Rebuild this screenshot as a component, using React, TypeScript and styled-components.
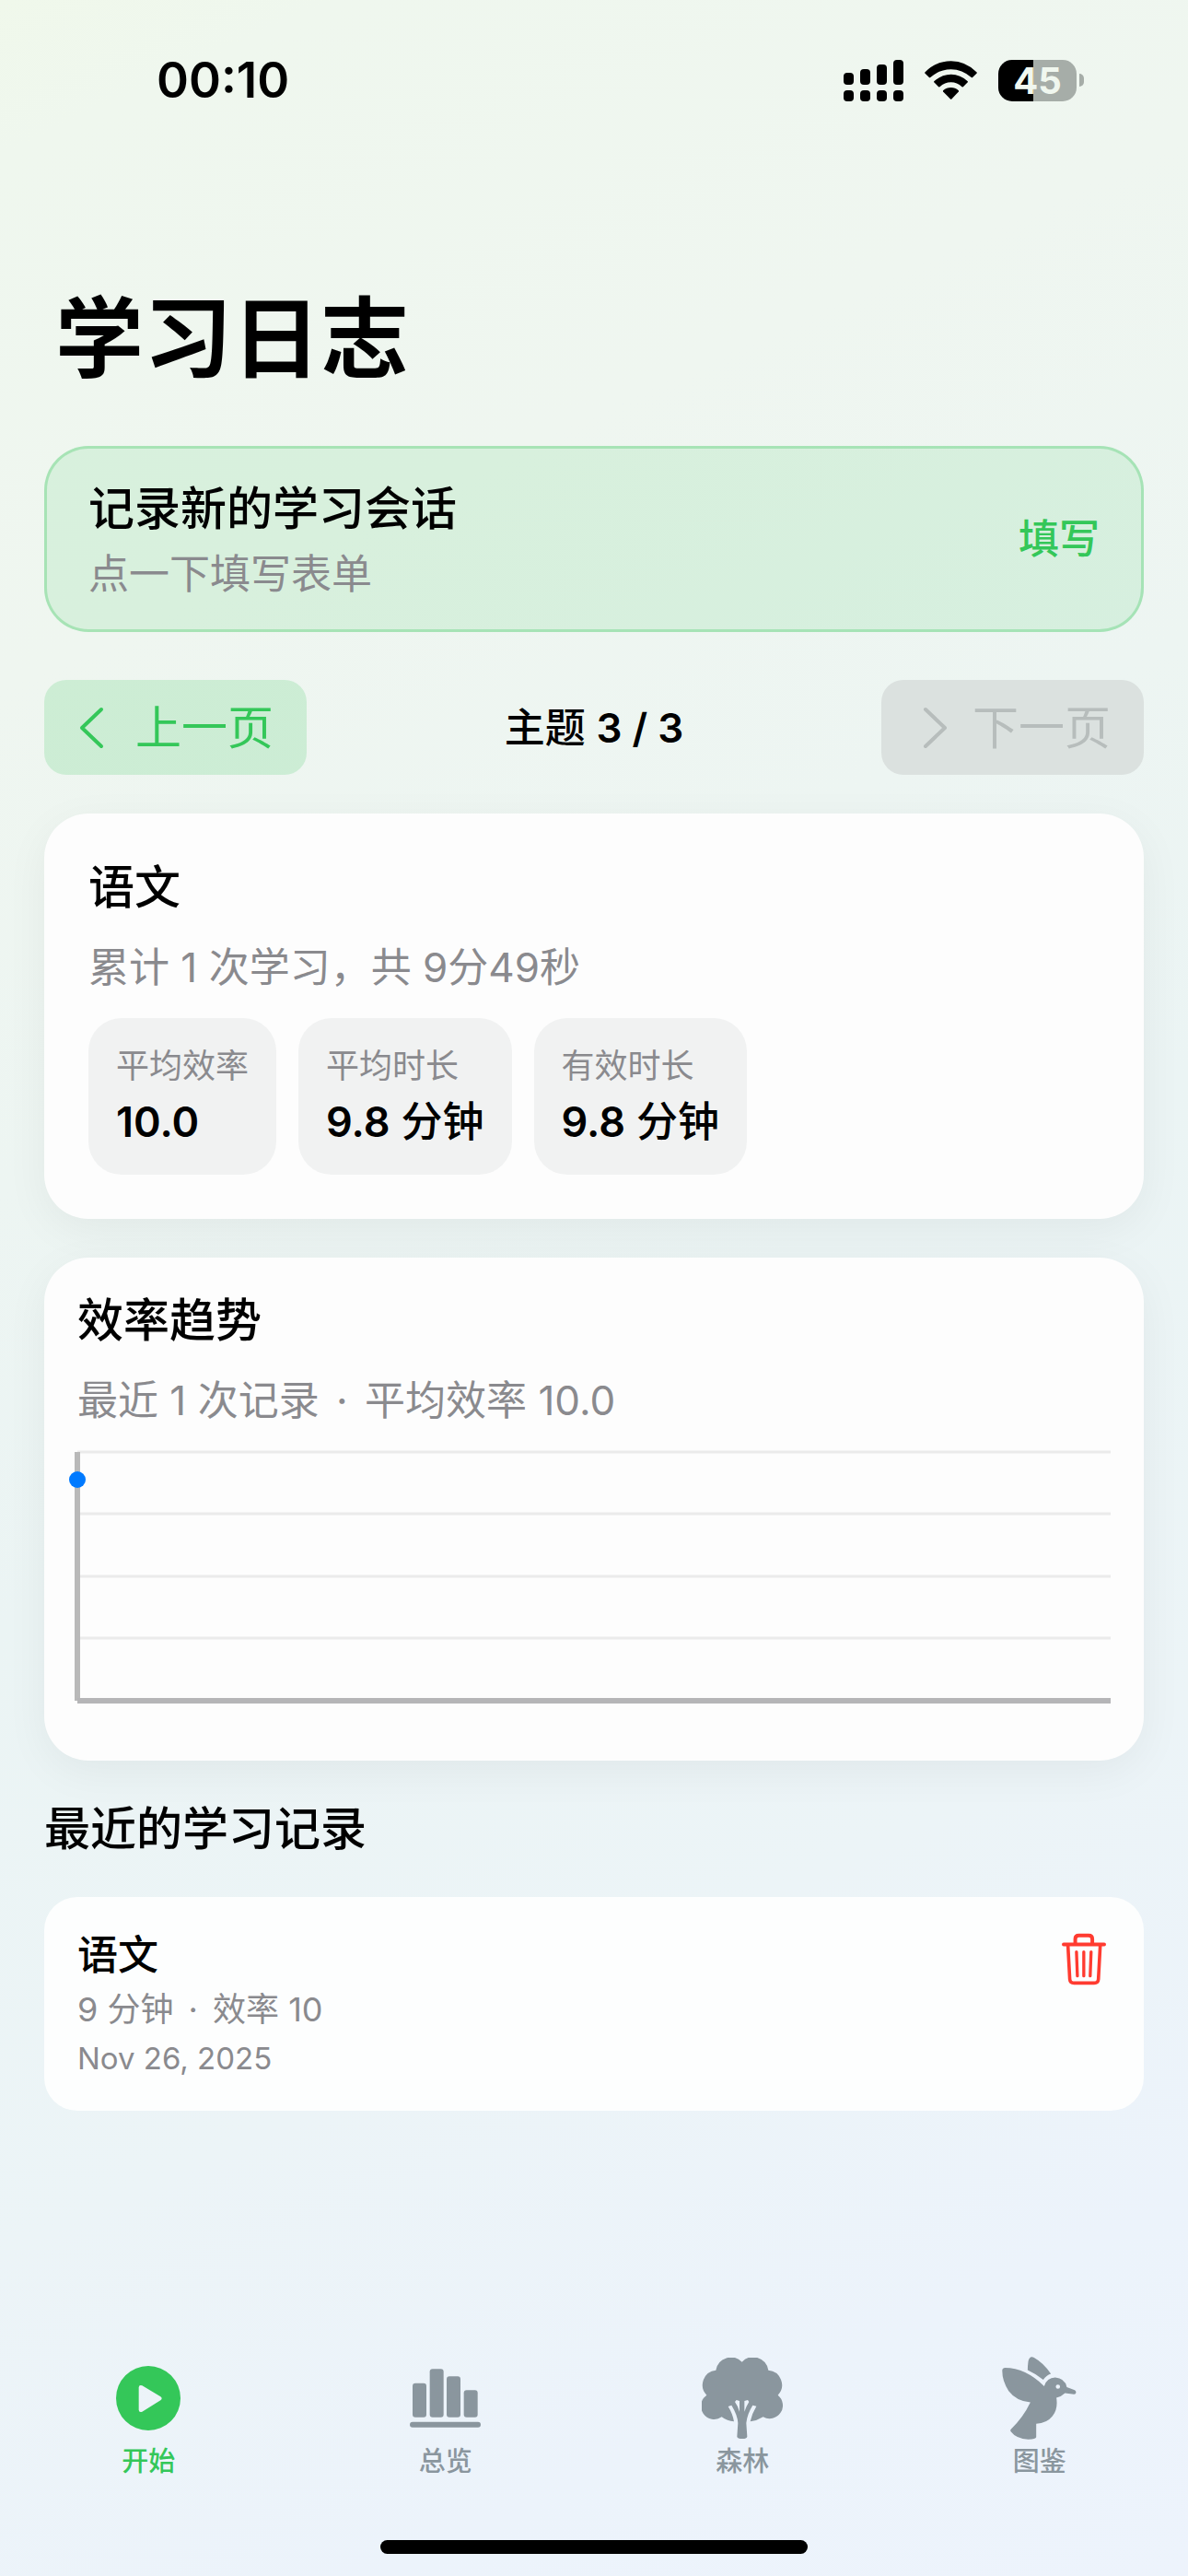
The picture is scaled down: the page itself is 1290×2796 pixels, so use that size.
import React from "react";
import styled, { createGlobalStyle } from "styled-components";

const green = "#34c759";
const gray = "#8a8a8e";
const slate = "#8a969e";

const GlobalStyle = createGlobalStyle`
  *, *::before, *::after { box-sizing: border-box; }
  body {
    margin: 0;
    font-family: Inter, "Noto Sans CJK SC", sans-serif;
    color: #000;
  }
  button { font: inherit; border: 0; margin: 0; cursor: pointer; }
  h1, h2, h3, p, ul, dl, dd { margin: 0; padding: 0; }
  svg { display: block; flex: none; }
`;

const Page = styled.div`
  min-height: 100vh;
  display: flex;
  flex-direction: column;
  background: linear-gradient(155deg, #f0f8eb 0%, #eff7ee 5%, #eff6f0 22%, #edf5f2 38%, #ebf4f4 52%, #ecf4f7 72%, #ecf3fb 88%, #edf3fc 100%);
`;

const StatusBar = styled.header`
  height: 174px;
  padding: 0 113px 0 170px;
  display: flex;
  align-items: center;
  justify-content: space-between;
`;

const Clock = styled.time`
  font-size: 53px;
  line-height: 60px;
  font-weight: 600;
`;

const StatusIcons = styled.div`
  display: flex;
  align-items: center;
  gap: 23px;
`;

const Battery = styled.div`
  display: flex;
  align-items: center;
  gap: 3px;
`;

const BatteryBody = styled.div<{ $level: number }>`
  width: 85px;
  height: 45px;
  border-radius: 15px;
  display: flex;
  align-items: center;
  justify-content: center;
  font-size: 40px;
  line-height: 45px;
  font-weight: 700;
  color: #f0f7ef;
  background: linear-gradient(to right, #000 ${(p) => p.$level}%, #a6ada8 ${(p) => p.$level}%);
`;

const BatteryTip = styled.span`
  width: 5px;
  height: 14px;
  border-radius: 0 7px 7px 0;
  background: #a6ada8;
`;

const PageTitle = styled.h1`
  padding: 133px 60px 0;
  font-size: 96px;
  line-height: 120px;
  font-weight: 700;
`;

const Content = styled.main`
  padding: 57px 48px 42px;
  display: flex;
  flex-direction: column;
  gap: 42px;
`;

const Heading = styled.h2`
  font-size: 50px;
  line-height: 64px;
  font-weight: 500;
`;

const Secondary = styled.p`
  font-size: 44px;
  line-height: 54px;
  color: ${gray};
`;

const Dot = styled.span`
  margin: 0 6px;
`;

const Figure = styled.span`
  font-weight: 600;
`;

const NewSession = styled.button`
  width: 100%;
  padding: 36px 48px;
  display: flex;
  align-items: center;
  justify-content: space-between;
  text-align: left;
  color: #000;
  border-radius: 48px;
  background: rgba(52, 199, 89, 0.12);
  box-shadow: inset 0 0 0 3px rgba(52, 199, 89, 0.3);
`;

const SessionText = styled.span`
  display: flex;
  flex-direction: column;
  gap: 12px;
`;

const SessionAction = styled.span`
  font-size: 44px;
  line-height: 54px;
  font-weight: 500;
  color: ${green};
`;

const Pager = styled.nav`
  margin-top: 10px;
  display: flex;
  align-items: center;
  justify-content: space-between;
`;

const PagerButton = styled.button`
  height: 103px;
  padding: 0 36px;
  display: flex;
  align-items: center;
  gap: 12px;
  border-radius: 24px;
  font-size: 50px;
  line-height: 60px;
  color: ${green};
  background: rgba(52, 199, 89, 0.18);

  &:disabled {
    color: #b7bdbc;
    background: #dbe1df;
    cursor: default;
  }
`;

const PagerLabel = styled.p`
  font-size: 44px;
  line-height: 54px;
  font-weight: 500;
`;

const Card = styled.section<{ $padding: number }>`
  padding: ${(p) => p.$padding}px;
  display: flex;
  flex-direction: column;
  gap: 28px;
  border-radius: 48px;
  background: #fdfdfd;
  box-shadow: 0 12px 48px rgba(0, 0, 0, 0.05);
`;

const Stats = styled.dl`
  display: flex;
  gap: 24px;
`;

const Stat = styled.div`
  padding: 30px;
  display: flex;
  flex-direction: column;
  gap: 12px;
  border-radius: 36px;
  background: #f1f2f2;
`;

const StatName = styled.dt`
  font-size: 36px;
  line-height: 44px;
  color: ${gray};
`;

const StatValue = styled.dd`
  font-size: 45px;
  line-height: 54px;
  font-weight: 500;
`;

const Chart = styled.svg`
  width: 100%;
  height: 300px;
  overflow: visible;
`;

const Record = styled.article`
  padding: 36px;
  display: flex;
  align-items: flex-start;
  justify-content: space-between;
  border-radius: 36px;
  background: #fdfefe;
`;

const RecordText = styled.div`
  display: flex;
  flex-direction: column;
  gap: 10px;
`;

const RecordTitle = styled.h3`
  font-size: 44px;
  line-height: 54px;
  font-weight: 500;
`;

const RecordMeta = styled.p`
  font-size: 36px;
  line-height: 44px;
  color: ${gray};
`;

const RecordDate = styled.time`
  font-size: 33px;
  line-height: 42px;
  color: ${gray};
`;

const DeleteButton = styled.button`
  padding: 3px 5px;
  background: none;
  color: #ff3b30;
`;

const Footer = styled.footer`
  margin-top: auto;
  padding-bottom: 24px;
  display: flex;
  flex-direction: column;
  align-items: center;
  gap: 67px;
`;

const TabBar = styled.nav`
  width: 100%;
  display: grid;
  grid-template-columns: repeat(4, 1fr);
`;

const Tab = styled.button<{ $active?: boolean }>`
  padding: 0;
  display: flex;
  flex-direction: column;
  align-items: center;
  gap: 6px;
  background: none;
  font-size: 29px;
  line-height: 36px;
  font-weight: 500;
  color: ${(p) => (p.$active ? green : slate)};
`;

const TabIcon = styled.span`
  height: 90px;
  display: flex;
  align-items: center;
`;

const HomeIndicator = styled.div`
  width: 36%;
  height: 15px;
  border-radius: 8px;
  background: #000;
`;

const SignalIcon = () => (
  <svg width="65" height="45" viewBox="0 0 65 45" aria-hidden="true">
    <rect x="0" y="14" width="11" height="13" rx="4" />
    <rect x="18" y="10" width="11" height="17" rx="4" />
    <rect x="36" y="5" width="11" height="22" rx="4" />
    <rect x="54" y="0" width="11" height="27" rx="4" />
    {[0, 18, 36, 54].map((x) => (
      <rect key={x} x={x} y="33" width="11" height="12" rx="4" />
    ))}
  </svg>
);

const WifiIcon = () => (
  <svg width="57" height="42" viewBox="371 75 173 126" aria-hidden="true">
    <path d="M372 112 Q409 75 458 75 Q506 75 543 112 Q544 114 543 115 L529 129 Q527 130 525 129 Q495 102 458 102 Q420 102 390 129 Q388 130 386 129 L372 115 Q371 114 372 112Z" />
    <path d="M402 142 Q427 119 458 119 Q489 119 513 142 Q514 144 513 145 L498 160 Q496 161 494 160 Q478 145 458 145 Q437 145 421 160 Q419 161 417 160 L402 145 Q401 144 402 142Z" />
    <path d="M432 172 Q443 162 458 162 Q472 162 483 172 Q484 174 483 176 L460 200 Q458 202 456 200 L432 176 Q431 174 432 172Z" />
  </svg>
);

const Chevron = ({ d }: { d: string }) => (
  <svg width="51" height="51" viewBox="0 0 51 51" fill="none" stroke="currentColor" strokeWidth="4" strokeLinecap="round" strokeLinejoin="round" aria-hidden="true">
    <path d={d} />
  </svg>
);

const TrashIcon = () => (
  <svg width="48" height="57" viewBox="159 107 145 170" fill="none" stroke="currentColor" strokeLinecap="round" strokeLinejoin="round" aria-hidden="true">
    <path strokeWidth="12" d="M165 144H298" />
    <path strokeWidth="12" d="M203 142V126Q203 114 215 114H247Q259 114 259 126V142" />
    <path strokeWidth="11" d="M179 146L185 257Q186 270 199 270H265Q278 270 279 257L285 146" />
    <path strokeWidth="10" d="M207 168L210 247M231 168V247M255 168L252 247" />
  </svg>
);

const PlayIcon = () => (
  <svg width="70" height="70" viewBox="141 84 210 210" fill="currentColor" aria-hidden="true">
    <path fillRule="evenodd" d="M246 84A105 105 0 0 1 246 294A105 105 0 0 1 246 84ZM215 154V227Q216 237 226 233L286 196Q294 190 286 184L226 148Q216 144 215 154Z" />
  </svg>
);

const BarsIcon = () => (
  <svg width="77" height="64" viewBox="1095 95 231 190" fill="currentColor" aria-hidden="true">
    <rect x="1104" y="141" width="45" height="111" rx="9" />
    <rect x="1160" y="95" width="45" height="157" rx="9" />
    <rect x="1215" y="119" width="45" height="133" rx="9" />
    <rect x="1271" y="164" width="45" height="88" rx="9" />
    <rect x="1095" y="267" width="231" height="18" rx="9" />
  </svg>
);

const TreeIcon = () => (
  <svg width="88" height="88" viewBox="126 57 262 264" fill="currentColor" aria-hidden="true">
    <path
      fillRule="evenodd"
      d="M256 71A50 50 0 0 1 342 98A48 48 0 0 1 373 179A43 43 0 0 1 325 250Q306 262 283 265Q289 238 303 215L291 212Q273 240 270 270L273 314Q272 321 257 321Q241 321 240 314L243 270Q242 245 222 212L211 216Q226 240 230 265Q208 264 190 250A43 43 0 0 1 141 179A48 48 0 0 1 171 98A50 50 0 0 1 256 71ZM233 201L238 195L248 198V233Q243 215 233 201ZM279 201L275 195L264 198V233Q270 215 279 201Z"
    />
  </svg>
);

const BirdIcon = () => (
  <svg width="81" height="90" viewBox="1104 51 242 271" fill="currentColor" aria-hidden="true">
    <path d="M1199 52Q1192 54 1189 66Q1187 80 1187 95Q1215 108 1238 126Q1248 112 1263 107Q1240 72 1208 54Q1203 51 1199 52Z" />
    <path
      fillRule="evenodd"
      d="M1113 87Q1180 87 1241 147Q1250 120 1277 119Q1308 121 1315 150L1341 160Q1346 163 1345 169Q1343 174 1338 174L1309 170Q1298 181 1281 185Q1287 222 1268 245Q1250 268 1215 270V314Q1214 321 1189 321Q1150 320 1132 296Q1129 290 1133 287Q1172 250 1196 200Q1150 196 1125 163Q1103 130 1104 95Q1105 87 1113 87ZM1286 142A7 7 0 0 0 1286 156A7 7 0 0 0 1286 142Z"
    />
  </svg>
);

const stats = [
  { name: "平均效率", figure: "10.0", unit: "" },
  { name: "平均时长", figure: "9.8", unit: " 分钟" },
  { name: "有效时长", figure: "9.8", unit: " 分钟" },
];

const tabs = [
  { label: "开始", icon: <PlayIcon /> },
  { label: "总览", icon: <BarsIcon /> },
  { label: "森林", icon: <TreeIcon /> },
  { label: "图鉴", icon: <BirdIcon /> },
];

const gridLines = [1, 68, 136, 203];

export default function App() {
  return (
    <Page lang="zh-CN">
      <GlobalStyle />
      <StatusBar>
        <Clock>00:10</Clock>
        <StatusIcons>
          <SignalIcon />
          <WifiIcon />
          <Battery>
            <BatteryBody $level={45}>45</BatteryBody>
            <BatteryTip />
          </Battery>
        </StatusIcons>
      </StatusBar>

      <PageTitle>学习日志</PageTitle>

      <Content>
        <NewSession type="button">
          <SessionText>
            <Heading as="span">记录新的学习会话</Heading>
            <Secondary as="span">点一下填写表单</Secondary>
          </SessionText>
          <SessionAction>填写</SessionAction>
        </NewSession>

        <Pager aria-label="主题">
          <PagerButton type="button">
            <Chevron d="M26 6L5 26L26 46" />
            上一页
          </PagerButton>
          <PagerLabel>
            主题 <Figure>3 / 3</Figure>
          </PagerLabel>
          <PagerButton type="button" disabled>
            <Chevron d="M12 6L33 26L12 46" />
            下一页
          </PagerButton>
        </Pager>

        <Card $padding={48}>
          <Heading>语文</Heading>
          <Secondary>累计 1 次学习，共 9分49秒</Secondary>
          <Stats>
            {stats.map((s) => (
              <Stat key={s.name}>
                <StatName>{s.name}</StatName>
                <StatValue>
                  <Figure>{s.figure}</Figure>
                  {s.unit}
                </StatValue>
              </Stat>
            ))}
          </Stats>
        </Card>

        <Card $padding={36}>
          <Heading>效率趋势</Heading>
          <Secondary>
            最近 1 次记录 <Dot>·</Dot> 平均效率 10.0
          </Secondary>
          <Chart role="img" aria-label="效率趋势">
            {gridLines.map((y) => (
              <line key={y} x1="0" x2="100%" y1={y} y2={y} stroke="#ebebeb" strokeWidth="3" />
            ))}
            <line x1="0" x2="0" y1="1" y2="271" stroke="#b9b9b9" strokeWidth="6" />
            <line x1="0" x2="100%" y1="271" y2="271" stroke="#b5b5b7" strokeWidth="6" />
            <circle cx="0" cy="31" r="9" fill="#007aff" />
          </Chart>
        </Card>

        <Heading>最近的学习记录</Heading>

        <Record>
          <RecordText>
            <RecordTitle>语文</RecordTitle>
            <RecordMeta>
              9 分钟 <Dot>·</Dot> 效率 10
            </RecordMeta>
            <RecordDate dateTime="2025-11-26">Nov 26, 2025</RecordDate>
          </RecordText>
          <DeleteButton type="button" aria-label="删除">
            <TrashIcon />
          </DeleteButton>
        </Record>
      </Content>

      <Footer>
        <TabBar>
          {tabs.map((t, i) => (
            <Tab key={t.label} type="button" $active={i === 0}>
              <TabIcon>{t.icon}</TabIcon>
              {t.label}
            </Tab>
          ))}
        </TabBar>
        <HomeIndicator />
      </Footer>
    </Page>
  );
}
